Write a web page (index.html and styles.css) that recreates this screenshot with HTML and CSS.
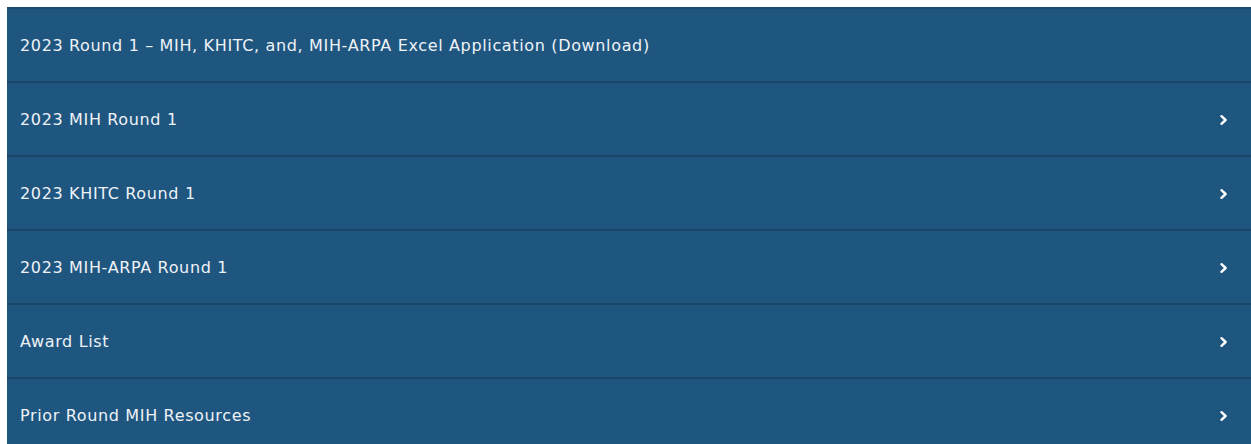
FILE: index.html
```html
<!DOCTYPE html>
<html lang="en">
<head>
<meta charset="utf-8">
<title>MIH Resources</title>
<link rel="stylesheet" href="styles.css">
</head>
<body>
<ul class="accordion">
  <li class="item"><a class="row" href="#">2023 Round 1 – MIH, KHITC, and, MIH-ARPA Excel Application (Download)</a></li>
  <li class="item"><a class="row" href="#">2023 MIH Round 1<svg class="chev" viewBox="0 0 8 10" width="8" height="10"><path d="M1.5 1.2 L5.6 5 L1.5 8.8" fill="none" stroke="#fff" stroke-width="2.4" stroke-linecap="round" stroke-linejoin="round"/></svg></a></li>
  <li class="item"><a class="row" href="#">2023 KHITC Round 1<svg class="chev" viewBox="0 0 8 10" width="8" height="10"><path d="M1.5 1.2 L5.6 5 L1.5 8.8" fill="none" stroke="#fff" stroke-width="2.4" stroke-linecap="round" stroke-linejoin="round"/></svg></a></li>
  <li class="item"><a class="row" href="#">2023 MIH-ARPA Round 1<svg class="chev" viewBox="0 0 8 10" width="8" height="10"><path d="M1.5 1.2 L5.6 5 L1.5 8.8" fill="none" stroke="#fff" stroke-width="2.4" stroke-linecap="round" stroke-linejoin="round"/></svg></a></li>
  <li class="item"><a class="row" href="#">Award List<svg class="chev" viewBox="0 0 8 10" width="8" height="10"><path d="M1.5 1.2 L5.6 5 L1.5 8.8" fill="none" stroke="#fff" stroke-width="2.4" stroke-linecap="round" stroke-linejoin="round"/></svg></a></li>
  <li class="item"><a class="row" href="#">Prior Round MIH Resources<svg class="chev" viewBox="0 0 8 10" width="8" height="10"><path d="M1.5 1.2 L5.6 5 L1.5 8.8" fill="none" stroke="#fff" stroke-width="2.4" stroke-linecap="round" stroke-linejoin="round"/></svg></a></li>
</ul>
</body>
</html>
```
FILE: styles.css
```css
html, body {
  margin: 0;
  padding: 0;
  background: #ffffff;
}

.accordion {
  list-style: none;
  margin: 7px 0 0 7px;
  padding: 0;
  background: #1f5680;
  border-top: 2px solid #1a4a6e;
}

.item + .item {
  border-top: 2px solid #194566;
}

.row {
  display: flex;
  align-items: center;
  justify-content: space-between;
  box-sizing: border-box;
  height: 72px;
  padding: 1px 23px 0 13px;
  font-family: "DejaVu Sans", "Liberation Sans", sans-serif;
  font-size: 16px;
  color: #eef2f6;
  text-decoration: none;
  letter-spacing: 0.65px;
}

.chev {
  flex: none;
}
```
